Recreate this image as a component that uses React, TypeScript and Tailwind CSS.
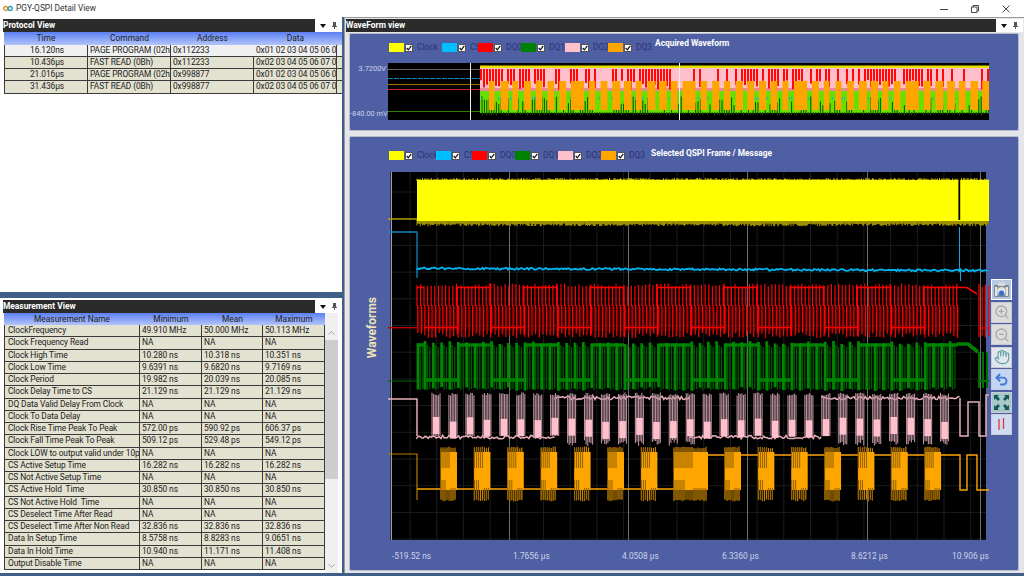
import { Hand, Undo2, ZoomIn, ZoomOut } from "lucide-react";

const rnd = (i: number) => {
  const v = Math.sin(i * 12.9898) * 43758.5453;
  return v - Math.floor(v);
};

const seg = (x: number, y1: number, y2: number) => `M${x.toFixed(1)} ${y1.toFixed(1)}V${y2.toFixed(1)}`;

const protocolRows = [
  ["16.120ns", "PAGE PROGRAM (02h", "0x112233", "0x01 02 03 04 05 06 0"],
  ["10.436µs", "FAST READ (0Bh)", "0x112233", "0x02 03 04 05 06 07 0"],
  ["21.016µs", "PAGE PROGRAM (02h", "0x998877", "0x01 02 03 04 05 06 0"],
  ["31.436µs", "FAST READ (0Bh)", "0x998877", "0x02 03 04 05 06 07 0"],
];

const measurementRows = [
  ["ClockFrequency", "49.910 MHz", "50.000 MHz", "50.113 MHz"],
  ["Clock Frequency Read", "NA", "NA", "NA"],
  ["Clock High Time", "10.280 ns", "10.318 ns", "10.351 ns"],
  ["Clock Low Time", "9.6391 ns", "9.6820 ns", "9.7169 ns"],
  ["Clock Period", "19.982 ns", "20.039 ns", "20.085 ns"],
  ["Clock Delay Time to CS", "21.129 ns", "21.129 ns", "21.129 ns"],
  ["DQ Data Valid Delay From Clock", "NA", "NA", "NA"],
  ["Clock To Data Delay", "NA", "NA", "NA"],
  ["Clock Rise Time Peak To Peak", "572.00 ps", "590.92 ps", "606.37 ps"],
  ["Clock Fall Time Peak To Peak", "509.12 ps", "529.48 ps", "549.12 ps"],
  ["Clock LOW to output valid under 10p", "NA", "NA", "NA"],
  ["CS Active Setup Time", "16.282 ns", "16.282 ns", "16.282 ns"],
  ["CS Not Active Setup Time", "NA", "NA", "NA"],
  ["CS Active Hold  Time", "30.850 ns", "30.850 ns", "30.850 ns"],
  ["CS Not Active Hold  Time", "NA", "NA", "NA"],
  ["CS Deselect Time After Read", "NA", "NA", "NA"],
  ["CS Deselect Time After Non Read", "32.836 ns", "32.836 ns", "32.836 ns"],
  ["Data In Setup Time", "8.5758 ns", "8.8283 ns", "9.0651 ns"],
  ["Data In Hold Time", "10.940 ns", "11.171 ns", "11.408 ns"],
  ["Output Disable Time", "NA", "NA", "NA"],
];

const legendColors = ["bg-[#ffff00]", "bg-[#00bfff]", "bg-[#ff0000]", "bg-[#008000]", "bg-[#ffc0cb]", "bg-[#ffa500]"];
const legendNames = ["Clock", "CS", "DQ0", "DQ1", "DQ2", "DQ3"];
const topWidths = ["w-[53px]", "w-[36px]", "w-[43px]", "w-[44px]", "w-[43px]", "w-[47px]"];
const mainWidths = ["w-[47px]", "w-[36px]", "w-[43px]", "w-[43px]", "w-[43px]", "w-[50px]"];

const xLabels: [string, string][] = [
  ["-519.52 ns", "w-[121px]"],
  ["1.7656 µs", "w-[109px]"],
  ["4.0508 µs", "w-[100px]"],
  ["6.3360 µs", "w-[129px]"],
  ["8.6212 µs", "w-[101px]"],
  ["10.906 µs", "w-[40px]"],
];

// main chart paths, coordinates are screen pixels (viewBox starts at 388,172)
const buildMain = () => {
  let grid = "";
  for (let x = 410; x < 986; x += 26.7) grid += seg(x, 172, 540);
  for (let y = 192; y < 540; y += 26.7) grid += `M391 ${y.toFixed(1)}H986`;

  let yellowLow = "";
  let yellowTop = "";
  for (let x = 417; x < 989; x += 1.1) {
    yellowLow += seg(x, 219, 223.5 + rnd(x) * 2.8);
    yellowTop += seg(x, 178 + rnd(x + 5) * 2, 181);
  }

  let cyan = "M417 270";
  for (let x = 418; x < 989; x += 1.5) {
    cyan += `L${x} ${(268.3 + ((x - 417) / 570) * 2.2 + (rnd(x) - 0.5) * 2).toFixed(1)}`;
  }

  let redHi = "";
  let redDark = "";
  let redRun = "";
  for (let k = -1; k < 16; k++) {
    const s = 424 + 33.35 * k;
    const high = k % 2 !== 0;
    const start = Math.max(s, 417);
    redRun += high ? `M${start} 287.5H${s + 33.35}` : `M${start} 327.5H${s + 33.35}`;
    for (let x = start; x < s + 33; x += 3.6) {
      const n = x * 3;
      redHi += seg(x, 283.5 + rnd(n) * 3, 306);
      redHi += seg(x + 0.8, 305, 333 + rnd(n + 1) * 5);
      redDark += seg(x + 2, 307, 331);
    }
  }
  redRun += "M957 287.5H967L977 294";
  let redEnd = "";
  for (let x = 979; x < 989; x += 3.2) redEnd += seg(x, 284 + rnd(x) * 3, 335 + rnd(x + 1) * 3);
  redEnd += "M979 328H989";

  let green = "";
  let greenDark = "";
  let greenRun = "";
  for (let k = -1; k < 16; k++) {
    const s = 424 + 33.35 * k;
    const high = k % 2 !== 0;
    const start = Math.max(s, 417);
    greenRun += high ? `M${start} 345H${s + 33.35}` : `M${start} 380H${s + 33.35}`;
    for (let x = start; x < s + 33; x += 8.3) {
      green += seg(x + 1, 341 + rnd(x) * 3, 387 + rnd(x + 2) * 4);
      greenDark += seg(x + 3.4, 345, 390);
      greenDark += seg(x + 5.8, 347, 389);
    }
  }
  greenRun += "M957 344H968L978 352";
  let greenEnd = "";
  for (let x = 979; x < 989; x += 4) greenEnd += seg(x, 352, 388);
  greenEnd += "M979 381H989";

  let pinkTop = "";
  const pinkSolid: { x: number; w: number; y: number; h: number }[] = [];
  for (let k = 0; k <= 30; k++) {
    const s = 432 + 16.95 * k;
    const highBase = (s > 555 && s < 690) || s > 822;
    for (let x = s; x < s + 8.5; x += 1.6) pinkTop += seg(x, 392.5 + rnd(x) * 3, highBase ? 440 + rnd(x + 1) * 6 : 436);
    pinkSolid.push({ x: s + 0.8, w: 6.6, y: 417 + rnd(k) * 5, h: 17 });
  }
  let pinkBase = "M388 399H417V436";
  const basePoints = [
    [417, 555, 437],
    [555, 690, 398],
    [690, 822, 437],
    [822, 960, 398],
  ];
  basePoints.forEach(([a, b, y]) => {
    pinkBase += `M${a} ${y}`;
    for (let x = a; x < b; x += 1.6) pinkBase += `L${x} ${(y + (rnd(x) - 0.5) * 3.5).toFixed(1)}`;
  });
  pinkBase += "M960 398V436H968V402H979V436H986V395H989";

  const orangeBursts: [number, number][] = [];
  for (let k = 0; k < 7; k++) orangeBursts.push([441 + 33.4 * k, 16]);
  orangeBursts.push([674, 34]);
  for (let k = 0; k < 7; k++) orangeBursts.push([725 + 33.35 * k, 16]);
  let orangeDark = "";
  let orangeEdge = "";
  orangeBursts.forEach(([s, w]) => {
    for (let x = s; x < s + w; x += 2) {
      orangeEdge += seg(x, 446.5 + rnd(x) * 2, 499 + rnd(x + 1) * 2.5);
      if (x < s + w * 0.55) orangeDark += seg(x, 447, 468);
      else orangeDark += seg(x, 488, 500);
      if (x < s + w * 0.3) orangeDark += seg(x, 480, 500);
    }
  });
  const orangeBase = "M417 489H674M708 455H960V490H967V455H977V490H989";

  return {
    grid,
    yellowLow,
    yellowTop,
    cyan,
    redHi,
    redDark,
    redRun,
    redEnd,
    green,
    greenDark,
    greenRun,
    greenEnd,
    pinkTop,
    pinkSolid,
    pinkBase,
    orangeBursts,
    orangeDark,
    orangeEdge,
    orangeBase,
  };
};

const buildMini = () => {
  let red = "";
  let gaps = "";
  let specks = "";
  let teeth = "";
  for (let x = 481; x < 989; x += 3) {
    const chunk = Math.floor((x - 481) / 64) % 2;
    if (rnd(x) > (chunk ? 0.6 : 0.22)) red += seg(x, 69, 80 + rnd(x + 1) * 10);
  }
  for (let x = 482; x < 989; x += 2.4) {
    if (rnd(x + 3) > 0.5) gaps += seg(x, 96 + rnd(x) * 10, 113);
    if (rnd(x + 4) > 0.75) specks += seg(x, 97, 100);
    teeth += seg(x, 112, 113.5 + rnd(x + 7) * 2);
  }
  const orange: [number, number][] = [];
  let x = 489;
  let k = 0;
  while (x < 985) {
    const w = k % 9 === 7 ? 13 : 5.5 + rnd(k) * 2.5;
    orange.push([x, w]);
    x += k % 9 === 7 ? 18 : 11.7;
    k++;
  }
  return { red, gaps, specks, teeth, orange };
};

const main = buildMain();
const mini = buildMini();

const MainChart = () => (
  <svg viewBox="388 172 602 370" className="h-[370px] w-[602px] shrink-0">
    <rect x="390.5" y="172" width="595.5" height="368" fill="#000" />
    <path d={main.grid} stroke="#1b1b22" strokeWidth="1" fill="none" />
    <path d="M509.5 172V540M628.5 172V540M747.5 172V540M867.5 172V540M980.5 172V540" stroke="#6e6e6e" strokeWidth="1" />
    <path d="M391.5 172V540" stroke="#a0a0a0" strokeWidth="1" />
    <path d="M388 219H417" stroke="#b5a800" strokeWidth="1.4" />
    <path d={main.yellowLow} stroke="#9c9000" strokeWidth="1.1" fill="none" />
    <path d={main.yellowTop} stroke="#d8d000" strokeWidth="1" fill="none" />
    <rect x="417" y="180" width="572" height="41" fill="#ffff00" />
    <rect x="958.4" y="178" width="1.8" height="42" fill="#000" />

    <path d="M388 232H417V278" stroke="#0f86bd" strokeWidth="1.3" fill="none" />
    <path d={main.cyan} stroke="#00b4f0" strokeWidth="1.8" fill="none" />
    <path d="M959.5 227V270M960.5 268V281" stroke="#0aa6df" strokeWidth="1" fill="none" />

    <path d="M388 327.7H417" stroke="#c00000" strokeWidth="1.4" />
    <path d={main.redDark} stroke="#8c0000" strokeWidth="0.8" fill="none" />
    <path d={main.redRun} stroke="#ff0000" strokeWidth="1.5" fill="none" />
    <path d={main.redHi} stroke="#ff0000" strokeWidth="1.2" fill="none" />
    <path d={main.redEnd} stroke="#ff0000" strokeWidth="1.2" fill="none" />

    <path d="M388 381H417" stroke="#006800" strokeWidth="1" />
    <path d={main.greenDark} stroke="#005c00" strokeWidth="1.3" fill="none" />
    <path d={main.greenRun} stroke="#008000" strokeWidth="3.6" fill="none" />
    <path d={main.green} stroke="#008800" strokeWidth="2.8" fill="none" />
    <path d={main.greenEnd} stroke="#007000" strokeWidth="2" fill="none" />

    <path d={main.pinkBase} stroke="#e8aeb8" strokeWidth="1.5" fill="none" />
    <path d={main.pinkTop} stroke="#b8909c" strokeWidth="1.1" fill="none" />
    {main.pinkSolid.map((p) => (
      <rect key={p.x} x={p.x} y={p.y} width={p.w} height={p.h} fill="#ffc0cb" />
    ))}

    <path d="M388 454H417V500" stroke="#b87c00" strokeWidth="1.2" fill="none" />
    <path d={main.orangeBase} stroke="#ffa500" strokeWidth="1.4" fill="none" />
    <path d={main.orangeEdge} stroke="#c08000" strokeWidth="1.2" fill="none" />
    {main.orangeBursts.map(([x, w]) => (
      <rect key={x} x={x} y="452" width={w} height="38" fill="#ffa500" />
    ))}
    <path d={main.orangeDark} stroke="#8f6000" strokeWidth="1" fill="none" />
  </svg>
);

const MiniChart = () => (
  <svg viewBox="388 63 601 57" className="h-[57px] w-[601px] shrink-0">
    <rect x="388" y="63" width="601" height="57" fill="#000" />
    <path d="M388 69.5H480" stroke="#6d5d62" strokeWidth="1" />
    <path d="M388 78.5H480" stroke="#0f88c4" strokeWidth="1.2" strokeDasharray="5 1" />
    <path d="M388 84.5H480" stroke="#a8700a" strokeWidth="1" />
    <path d="M388 89.5H480" stroke="#d42020" strokeWidth="1.2" />
    <path d="M388 111.5H480" stroke="#3f9c00" strokeWidth="0.8" />
    <rect x="480" y="65.5" width="509" height="3" fill="#e8e000" />
    <rect x="480" y="68" width="509" height="23" fill="#ffc0cb" />
    <rect x="480" y="88" width="509" height="4" fill="#e88a9a" />
    <path d={mini.red} stroke="#ff0000" strokeWidth="1.9" fill="none" />
    <rect x="480" y="91" width="509" height="22" fill="#66e000" />
    <path d={mini.gaps} stroke="#0c3a00" strokeWidth="0.9" fill="none" />
    <path d={mini.specks} stroke="#14b8d8" strokeWidth="1" fill="none" />
    <path d={mini.teeth} stroke="#1f6000" strokeWidth="0.9" fill="none" />
    {mini.orange.map(([x, w]) => (
      <rect key={x} x={x} y="81" width={w} height="29" fill="#ffa500" />
    ))}
    <path d="M470.5 63V120M679.5 63V120" stroke="#f0f0f0" strokeWidth="1" />
  </svg>
);

const PanelHeader = ({ title }: { title: string }) => (
  <div className="flex h-[13px] shrink-0 items-stretch">
    <div className="flex flex-1 items-center bg-[#2b2b2b] text-[8.4px] font-bold text-white">{title}</div>
    <div className="flex w-[27px] items-center justify-center gap-[6px] bg-white">
      <svg width="6" height="4" viewBox="0 0 6 4">
        <path d="M0 0H6L3 4Z" fill="#111" />
      </svg>
      <svg width="5" height="7" viewBox="0 0 5 7">
        <path d="M1 0H4V4H5V5H3V7H2V5H0V4H1Z" fill="#555" />
      </svg>
    </div>
  </div>
);

const LegendCheck = () => (
  <span className="flex h-[8px] w-[8px] shrink-0 items-center justify-center border border-[#555] bg-white">
    <svg width="6" height="6" viewBox="0 0 6 6">
      <path d="M0.7 3L2.3 4.8L5.3 0.8" stroke="#111" strokeWidth="1.2" fill="none" />
    </svg>
  </span>
);

const Legend = ({ widths, title, titleClass }: { widths: string[]; title: string; titleClass: string }) => (
  <div className="flex h-[9px] items-center pl-[39px] text-[8.4px] text-[#2a3470]">
    {legendNames.map((name, i) => (
      <div key={name} className={`flex shrink-0 items-center ${widths[i]}`}>
        <span className={`h-[8.5px] w-[15px] shrink-0 ${legendColors[i]}`} />
        <span className="ml-[1px]">
          <LegendCheck />
        </span>
        <span className="ml-[4px]">{name}</span>
      </div>
    ))}
    <span className={`whitespace-nowrap text-[8.4px] font-bold text-white ${titleClass}`}>{title}</span>
  </div>
);

const toolBtn = "flex h-[21px] w-[21px] items-center justify-center border border-[#c8ccd6]";

const Toolbar = () => (
  <div className="ml-[1px] flex flex-col gap-[1.5px]">
    <div className="flex h-[21px] w-[21px] items-center justify-center border border-white bg-[#b9c8e2]">
      <svg width="17" height="17" viewBox="0 0 17 17">
        <rect x="1" y="4" width="15" height="12" rx="1" fill="#7d8791" />
        <rect x="5" y="1.5" width="7" height="3.5" fill="#d9d9d9" />
        <circle cx="8.5" cy="10" r="4" fill="#dfe3e8" />
        <circle cx="8.5" cy="12" r="2.6" fill="#2f6fd0" />
        <rect x="2" y="6" width="2.4" height="9" fill="#e6e6e6" />
        <rect x="12.6" y="6" width="2.4" height="9" fill="#e6e6e6" />
      </svg>
    </div>
    <div className={`${toolBtn} bg-[#dcdcdc]`}>
      <ZoomIn size={16} color="#a8a8a8" strokeWidth={2} />
    </div>
    <div className={`${toolBtn} bg-[#dcdcdc]`}>
      <ZoomOut size={16} color="#a8a8a8" strokeWidth={2} />
    </div>
    <div className={`${toolBtn} bg-[#dfe6ee]`}>
      <Hand size={16} color="#5f9fa8" strokeWidth={1.7} />
    </div>
    <div className={`${toolBtn} bg-[#c4d6f4]`}>
      <Undo2 size={15} color="#3d78d8" strokeWidth={3} />
    </div>
    <div className={`${toolBtn} bg-[#a6c8c6]`}>
      <svg width="17" height="17" viewBox="0 0 17 17">
        <path d="M1 1H6L4.6 2.6L7 5L5 7L2.6 4.6L1 6Z" fill="#15575c" />
        <path d="M16 1H11L12.4 2.6L10 5L12 7L14.4 4.6L16 6Z" fill="#15575c" />
        <path d="M1 16H6L4.6 14.4L7 12L5 10L2.6 12.4L1 11Z" fill="#15575c" />
        <path d="M16 16H11L12.4 14.4L10 12L12 10L14.4 12.4L16 11Z" fill="#15575c" />
      </svg>
    </div>
    <div className={`${toolBtn} bg-[#cfdcf2]`}>
      <svg width="15" height="15" viewBox="0 0 15 15">
        <path d="M5 2V13M9.5 1V12" stroke="#e03838" strokeWidth="1.3" />
      </svg>
    </div>
  </div>
);

const cellBase = "overflow-hidden whitespace-pre border-r border-[#3a3a3a] pl-[2px] leading-[11px] tracking-[-0.1px]";

const ProtocolTable = () => (
  <div className="ml-[1px] text-[8.4px] text-[#222]">
    <div className="grid h-[12.5px] grid-cols-[84px_83px_83px_83px] bg-gradient-to-b from-[#5c7ff2] to-[#b3c4fa] text-center leading-[13px]">
      <div>Time</div>
      <div>Command</div>
      <div>Address</div>
      <div>Data</div>
    </div>
    {protocolRows.map((row, i) => (
      <div
        key={row[0]}
        className={`grid h-[12.3px] grid-cols-[84px_83px_83px_83px] border-b border-[#3a3a3a] ${i === 0 ? "bg-[#f0f0f0]" : "bg-[#e3e1d0]"}`}
      >
        <div className={`${cellBase} border-l text-center`}>{row[0]}</div>
        <div className={cellBase}>{row[1]}</div>
        <div className={`${cellBase} ${i === 0 ? "border-r-0" : ""}`}>{row[2]}</div>
        <div className={cellBase}>{row[3]}</div>
      </div>
    ))}
  </div>
);

const MeasurementTable = () => (
  <div className="flex flex-1 overflow-hidden pl-[1px] text-[8.4px] text-[#222]">
    <div className="w-[321px] shrink-0">
      <div className="grid h-[12px] grid-cols-[136px_62px_61px_62px] bg-gradient-to-b from-[#5c7ff2] to-[#b3c4fa] text-center leading-[12px]">
        <div>Measurement Name</div>
        <div>Minimum</div>
        <div>Mean</div>
        <div>Maximum</div>
      </div>
      {measurementRows.map((row) => (
        <div key={row[0]} className="grid h-[12.25px] grid-cols-[136px_62px_61px_62px] border-b border-[#3a3a3a] bg-[#e3e1d0]">
          <div className={`${cellBase} border-l pl-[3px]`}>{row[0]}</div>
          <div className={cellBase}>{row[1]}</div>
          <div className={cellBase}>{row[2]}</div>
          <div className={cellBase}>{row[3]}</div>
        </div>
      ))}
    </div>
    <div className="flex w-[13px] shrink-0 flex-col bg-[#f0f0f0]">
      <div className="h-[12px]" />
      <div className="flex h-[15px] items-center justify-center">
        <svg width="7" height="4" viewBox="0 0 7 4">
          <path d="M0.5 3.5L3.5 0.7L6.5 3.5" stroke="#a8a8a8" fill="none" />
        </svg>
      </div>
      <div className="h-[139px] bg-[#cdcdcd]" />
      <div className="flex-1" />
      <div className="flex h-[15px] items-center justify-center">
        <svg width="7" height="4" viewBox="0 0 7 4">
          <path d="M0.5 0.5L3.5 3.3L6.5 0.5" stroke="#a8a8a8" fill="none" />
        </svg>
      </div>
    </div>
  </div>
);

export default function App() {
  return (
    <div className="flex h-[576px] w-[1024px] flex-col overflow-hidden bg-[#3f5f88] [font-family:Roboto,sans-serif]">
      <div className="flex h-[17px] shrink-0 items-center bg-white pl-[3px] text-[8.4px] text-[#333]">
        <svg width="10" height="7" viewBox="0 0 10 7">
          <circle cx="2.6" cy="3.5" r="2" fill="none" stroke="#e08a20" strokeWidth="1.3" />
          <circle cx="7.2" cy="3.5" r="2" fill="none" stroke="#1f9fb0" strokeWidth="1.3" />
        </svg>
        <span className="ml-[3px]">PGY-QSPI Detail View</span>
        <div className="ml-auto flex items-center gap-[23px] pr-[14px]">
          <svg width="8" height="8" viewBox="0 0 8 8">
            <path d="M0 4.5H8" stroke="#333" strokeWidth="0.9" />
          </svg>
          <svg width="8" height="8" viewBox="0 0 8 8">
            <path d="M0.5 2H6V7.5H0.5ZM2 2V0.5H7.5V6H6" stroke="#333" strokeWidth="0.9" fill="none" />
          </svg>
          <svg width="8" height="8" viewBox="0 0 8 8">
            <path d="M0.5 0.5L7.5 7.5M7.5 0.5L0.5 7.5" stroke="#333" strokeWidth="0.9" />
          </svg>
        </div>
      </div>

      <div className="flex flex-1 gap-[2px] pb-[3px]">
        <div className="flex w-[342px] shrink-0 flex-col gap-[6px]">
          <div className="flex h-[275px] flex-col bg-white pl-[3px] pt-[2px]">
            <PanelHeader title="Protocol View" />
            <ProtocolTable />
          </div>
          <div className="flex flex-1 flex-col bg-white pl-[3px] pt-[2px]">
            <PanelHeader title="Measurement View" />
            <MeasurementTable />
          </div>
        </div>

        <div className="flex flex-1 flex-col border-l border-t border-[#9a9a9a] bg-[#e4e6ec] pl-[1px] pt-[1px]">
          <div className="pr-[1px]">
            <PanelHeader title="WaveForm view" />
          </div>
          <div className="flex flex-1 flex-col gap-[5px] pb-[2px] pl-[3px] pr-[5px] pt-[1px]">
            <div className="flex h-[98px] shrink-0 flex-col rounded-[2px] border border-[#b8bcc8] bg-[#4f5fa3] pt-[9px]">
              <Legend widths={topWidths} title="Acquired Waveform" titleClass="translate-y-[-4px]" />
              <div className="mt-[11px] flex">
                <div className="flex h-[57px] w-[38px] shrink-0 flex-col justify-between py-[1px] pr-[2px] text-right text-[7.4px] leading-[10px] text-[#cdd3ea]">
                  <span>3.7200V</span>
                  <span className="whitespace-nowrap">-840.00 mV</span>
                </div>
                <MiniChart />
              </div>
            </div>

            <div className="flex flex-1 flex-col rounded-[2px] border border-[#b8bcc8] bg-[#4f5fa3] pt-[14px]">
              <Legend widths={mainWidths} title="Selected QSPI Frame / Message" titleClass="translate-y-[-2px]" />
              <div className="mt-[12px] flex items-center">
                <div className="flex h-[370px] w-[38px] shrink-0 items-center justify-end pb-[58px] pr-[7px]">
                  <span className="rotate-180 text-[12px] font-bold text-[#ece2b4] [writing-mode:vertical-rl]">Waveforms</span>
                </div>
                <MainChart />
                <Toolbar />
              </div>
              <div className="mt-[8px] flex pl-[42px] text-[8.4px] text-[#cdd3ea]">
                {xLabels.map(([label, w]) => (
                  <span key={label} className={`shrink-0 whitespace-nowrap ${w}`}>
                    {label}
                  </span>
                ))}
              </div>
            </div>
          </div>
        </div>
      </div>
    </div>
  );
}
